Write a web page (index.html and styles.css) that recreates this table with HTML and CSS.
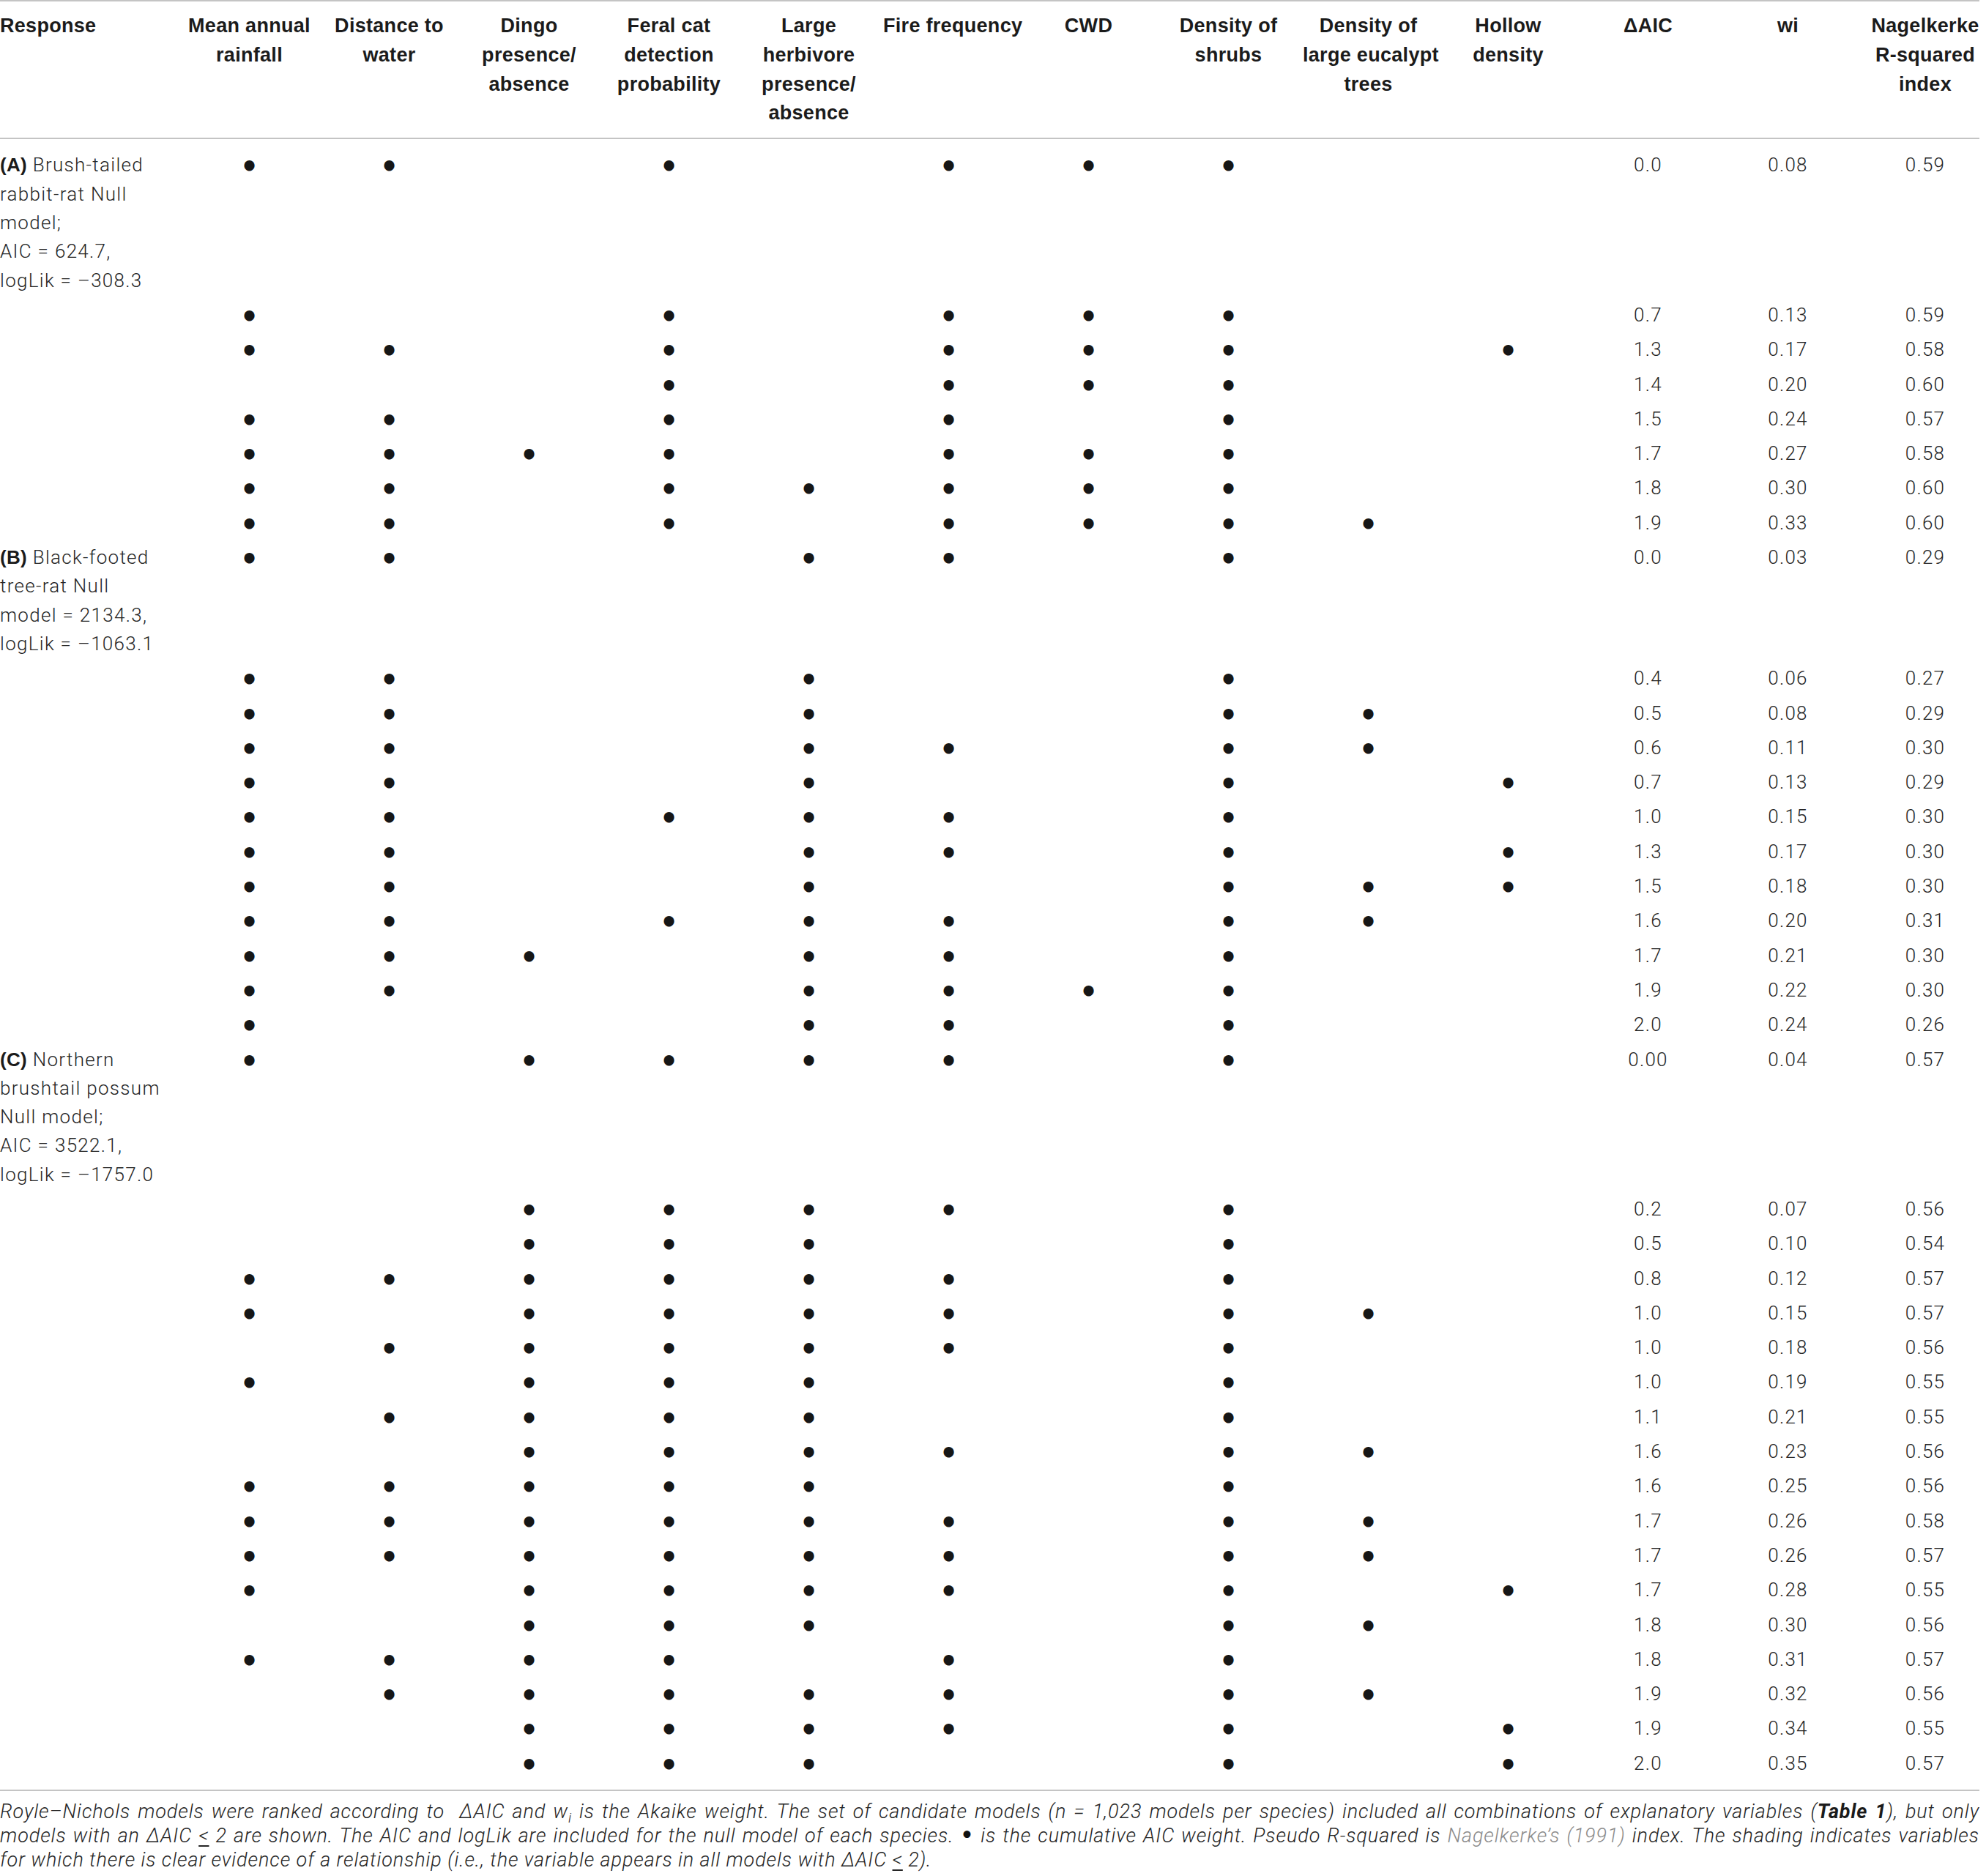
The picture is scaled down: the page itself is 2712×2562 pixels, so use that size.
FILE: index.html
```html
<!DOCTYPE html>
<html lang="en">
<head>
<meta charset="utf-8">
<title>Royle–Nichols model ranking</title>
<link rel="stylesheet" href="styles.css">
</head>
<body>
<div class="page">
<table class="models">
<colgroup>
<col class="c-resp"><col class="c-var"><col class="c-var"><col class="c-var"><col class="c-var"><col class="c-var"><col class="c-var"><col class="c-var"><col class="c-var"><col class="c-var"><col class="c-var"><col class="c-var"><col class="c-var"><col class="c-last">
</colgroup>
<thead>
<tr>
<th class="resp">Response</th>
<th>Mean annual<br>rainfall</th>
<th>Distance to<br>water</th>
<th>Dingo<br>presence/<br>absence</th>
<th>Feral cat<br>detection<br>probability</th>
<th>Large<br>herbivore<br>presence/<br>absence</th>
<th>Fire frequency</th>
<th>CWD</th>
<th>Density of<br>shrubs</th>
<th>Density of<br>large eucalypt<br>trees</th>
<th>Hollow<br>density</th>
<th>ΔAIC</th>
<th>wi</th>
<th class="last">Nagelkerke<br>R-squared<br>index</th>
</tr>
</thead>
<tbody>
<tr><td class="resp"><b>(A)</b> Brush-tailed<br>rabbit-rat Null<br>model;<br>AIC = 624.7,<br>logLik = –308.3</td><td>•</td><td>•</td><td></td><td>•</td><td></td><td>•</td><td>•</td><td>•</td><td></td><td></td><td class="n">0.0</td><td class="n">0.08</td><td class="n last">0.59</td></tr>
<tr><td class="resp"></td><td>•</td><td></td><td></td><td>•</td><td></td><td>•</td><td>•</td><td>•</td><td></td><td></td><td class="n">0.7</td><td class="n">0.13</td><td class="n last">0.59</td></tr>
<tr><td class="resp"></td><td>•</td><td>•</td><td></td><td>•</td><td></td><td>•</td><td>•</td><td>•</td><td></td><td>•</td><td class="n">1.3</td><td class="n">0.17</td><td class="n last">0.58</td></tr>
<tr><td class="resp"></td><td></td><td></td><td></td><td>•</td><td></td><td>•</td><td>•</td><td>•</td><td></td><td></td><td class="n">1.4</td><td class="n">0.20</td><td class="n last">0.60</td></tr>
<tr><td class="resp"></td><td>•</td><td>•</td><td></td><td>•</td><td></td><td>•</td><td></td><td>•</td><td></td><td></td><td class="n">1.5</td><td class="n">0.24</td><td class="n last">0.57</td></tr>
<tr><td class="resp"></td><td>•</td><td>•</td><td>•</td><td>•</td><td></td><td>•</td><td>•</td><td>•</td><td></td><td></td><td class="n">1.7</td><td class="n">0.27</td><td class="n last">0.58</td></tr>
<tr><td class="resp"></td><td>•</td><td>•</td><td></td><td>•</td><td>•</td><td>•</td><td>•</td><td>•</td><td></td><td></td><td class="n">1.8</td><td class="n">0.30</td><td class="n last">0.60</td></tr>
<tr><td class="resp"></td><td>•</td><td>•</td><td></td><td>•</td><td></td><td>•</td><td>•</td><td>•</td><td>•</td><td></td><td class="n">1.9</td><td class="n">0.33</td><td class="n last">0.60</td></tr>

<tr><td class="resp"><b>(B)</b> Black-footed<br>tree-rat Null<br>model = 2134.3,<br>logLik = –1063.1</td><td>•</td><td>•</td><td></td><td></td><td>•</td><td>•</td><td></td><td>•</td><td></td><td></td><td class="n">0.0</td><td class="n">0.03</td><td class="n last">0.29</td></tr>
<tr><td class="resp"></td><td>•</td><td>•</td><td></td><td></td><td>•</td><td></td><td></td><td>•</td><td></td><td></td><td class="n">0.4</td><td class="n">0.06</td><td class="n last">0.27</td></tr>
<tr><td class="resp"></td><td>•</td><td>•</td><td></td><td></td><td>•</td><td></td><td></td><td>•</td><td>•</td><td></td><td class="n">0.5</td><td class="n">0.08</td><td class="n last">0.29</td></tr>
<tr><td class="resp"></td><td>•</td><td>•</td><td></td><td></td><td>•</td><td>•</td><td></td><td>•</td><td>•</td><td></td><td class="n">0.6</td><td class="n">0.11</td><td class="n last">0.30</td></tr>
<tr><td class="resp"></td><td>•</td><td>•</td><td></td><td></td><td>•</td><td></td><td></td><td>•</td><td></td><td>•</td><td class="n">0.7</td><td class="n">0.13</td><td class="n last">0.29</td></tr>
<tr><td class="resp"></td><td>•</td><td>•</td><td></td><td>•</td><td>•</td><td>•</td><td></td><td>•</td><td></td><td></td><td class="n">1.0</td><td class="n">0.15</td><td class="n last">0.30</td></tr>
<tr><td class="resp"></td><td>•</td><td>•</td><td></td><td></td><td>•</td><td>•</td><td></td><td>•</td><td></td><td>•</td><td class="n">1.3</td><td class="n">0.17</td><td class="n last">0.30</td></tr>
<tr><td class="resp"></td><td>•</td><td>•</td><td></td><td></td><td>•</td><td></td><td></td><td>•</td><td>•</td><td>•</td><td class="n">1.5</td><td class="n">0.18</td><td class="n last">0.30</td></tr>
<tr><td class="resp"></td><td>•</td><td>•</td><td></td><td>•</td><td>•</td><td>•</td><td></td><td>•</td><td>•</td><td></td><td class="n">1.6</td><td class="n">0.20</td><td class="n last">0.31</td></tr>
<tr><td class="resp"></td><td>•</td><td>•</td><td>•</td><td></td><td>•</td><td>•</td><td></td><td>•</td><td></td><td></td><td class="n">1.7</td><td class="n">0.21</td><td class="n last">0.30</td></tr>
<tr><td class="resp"></td><td>•</td><td>•</td><td></td><td></td><td>•</td><td>•</td><td>•</td><td>•</td><td></td><td></td><td class="n">1.9</td><td class="n">0.22</td><td class="n last">0.30</td></tr>
<tr><td class="resp"></td><td>•</td><td></td><td></td><td></td><td>•</td><td>•</td><td></td><td>•</td><td></td><td></td><td class="n">2.0</td><td class="n">0.24</td><td class="n last">0.26</td></tr>

<tr><td class="resp"><b>(C)</b> Northern<br>brushtail possum<br>Null model;<br>AIC = 3522.1,<br>logLik = –1757.0</td><td>•</td><td></td><td>•</td><td>•</td><td>•</td><td>•</td><td></td><td>•</td><td></td><td></td><td class="n">0.00</td><td class="n">0.04</td><td class="n last">0.57</td></tr>
<tr><td class="resp"></td><td></td><td></td><td>•</td><td>•</td><td>•</td><td>•</td><td></td><td>•</td><td></td><td></td><td class="n">0.2</td><td class="n">0.07</td><td class="n last">0.56</td></tr>
<tr><td class="resp"></td><td></td><td></td><td>•</td><td>•</td><td>•</td><td></td><td></td><td>•</td><td></td><td></td><td class="n">0.5</td><td class="n">0.10</td><td class="n last">0.54</td></tr>
<tr><td class="resp"></td><td>•</td><td>•</td><td>•</td><td>•</td><td>•</td><td>•</td><td></td><td>•</td><td></td><td></td><td class="n">0.8</td><td class="n">0.12</td><td class="n last">0.57</td></tr>
<tr><td class="resp"></td><td>•</td><td></td><td>•</td><td>•</td><td>•</td><td>•</td><td></td><td>•</td><td>•</td><td></td><td class="n">1.0</td><td class="n">0.15</td><td class="n last">0.57</td></tr>
<tr><td class="resp"></td><td></td><td>•</td><td>•</td><td>•</td><td>•</td><td>•</td><td></td><td>•</td><td></td><td></td><td class="n">1.0</td><td class="n">0.18</td><td class="n last">0.56</td></tr>
<tr><td class="resp"></td><td>•</td><td></td><td>•</td><td>•</td><td>•</td><td></td><td></td><td>•</td><td></td><td></td><td class="n">1.0</td><td class="n">0.19</td><td class="n last">0.55</td></tr>
<tr><td class="resp"></td><td></td><td>•</td><td>•</td><td>•</td><td>•</td><td></td><td></td><td>•</td><td></td><td></td><td class="n">1.1</td><td class="n">0.21</td><td class="n last">0.55</td></tr>
<tr><td class="resp"></td><td></td><td></td><td>•</td><td>•</td><td>•</td><td>•</td><td></td><td>•</td><td>•</td><td></td><td class="n">1.6</td><td class="n">0.23</td><td class="n last">0.56</td></tr>
<tr><td class="resp"></td><td>•</td><td>•</td><td>•</td><td>•</td><td>•</td><td></td><td></td><td>•</td><td></td><td></td><td class="n">1.6</td><td class="n">0.25</td><td class="n last">0.56</td></tr>
<tr><td class="resp"></td><td>•</td><td>•</td><td>•</td><td>•</td><td>•</td><td>•</td><td></td><td>•</td><td>•</td><td></td><td class="n">1.7</td><td class="n">0.26</td><td class="n last">0.58</td></tr>
<tr><td class="resp"></td><td>•</td><td>•</td><td>•</td><td>•</td><td>•</td><td>•</td><td></td><td>•</td><td>•</td><td></td><td class="n">1.7</td><td class="n">0.26</td><td class="n last">0.57</td></tr>
<tr><td class="resp"></td><td>•</td><td></td><td>•</td><td>•</td><td>•</td><td>•</td><td></td><td>•</td><td></td><td>•</td><td class="n">1.7</td><td class="n">0.28</td><td class="n last">0.55</td></tr>
<tr><td class="resp"></td><td></td><td></td><td>•</td><td>•</td><td>•</td><td></td><td></td><td>•</td><td>•</td><td></td><td class="n">1.8</td><td class="n">0.30</td><td class="n last">0.56</td></tr>
<tr><td class="resp"></td><td>•</td><td>•</td><td>•</td><td>•</td><td></td><td>•</td><td></td><td>•</td><td></td><td></td><td class="n">1.8</td><td class="n">0.31</td><td class="n last">0.57</td></tr>
<tr><td class="resp"></td><td></td><td>•</td><td>•</td><td>•</td><td>•</td><td>•</td><td></td><td>•</td><td>•</td><td></td><td class="n">1.9</td><td class="n">0.32</td><td class="n last">0.56</td></tr>
<tr><td class="resp"></td><td></td><td></td><td>•</td><td>•</td><td>•</td><td>•</td><td></td><td>•</td><td></td><td>•</td><td class="n">1.9</td><td class="n">0.34</td><td class="n last">0.55</td></tr>
<tr><td class="resp"></td><td></td><td></td><td>•</td><td>•</td><td>•</td><td></td><td></td><td>•</td><td></td><td>•</td><td class="n">2.0</td><td class="n">0.35</td><td class="n last">0.57</td></tr>
</tbody>
</table>
<p class="note"><span class="ln just">Royle–Nichols models were ranked according to&nbsp; ΔAIC and <span class="w">w<sub class="sub">i</sub></span> is the Akaike weight. The set of candidate models (<i>n</i> = 1,023 models per species) included all combinations of explanatory variables (<b>Table 1</b>), but only</span><span class="ln just">models with an ΔAIC <span class="le">&lt;</span> 2 are shown. The AIC and logLik are included for the null model of each species. <span class="bul">•</span> is the cumulative AIC weight. Pseudo R-squared is <span class="ref">Nagelkerke’s (1991)</span> index. The shading indicates variables</span><span class="ln">for which there is clear evidence of a relationship (i.e., the variable appears in all models with ΔAIC <span class="le">&lt;</span> 2).</span></p>
</div>
</body>
</html>
```

FILE: styles.css
```css
html, body {
  margin: 0;
  padding: 0;
  background: #ffffff;
}

.page {
  width: 2703px;
}

.models {
  width: 2703px;
  border-collapse: separate;
  border-spacing: 0;
  table-layout: fixed;
  color: #222222;
}

.models col.c-resp { width: 245px; }
.models col.c-var { width: 191px; }
.models col.c-last { width: 166px; }

.models th {
  font-family: "Liberation Sans", Arial, sans-serif;
  font-weight: 700;
  font-size: 27px;
  line-height: 39.8px;
  letter-spacing: 0.3px;
  color: #1b1b1b;
  text-align: center;
  vertical-align: top;
  white-space: nowrap;
  padding: 14px 6px 13.3px;
  border-top: 2px solid #c4c4c4;
  border-bottom: 2px solid #c4c4c4;
}

.models th.resp {
  text-align: left;
  padding-left: 0;
}

.models th.last,
.models td.last {
  padding-left: 18px;
  padding-right: 0;
}

.models td {
  font-family: "DejaVu Sans", "Liberation Sans", sans-serif;
  font-weight: 700;
  font-size: 40px;
  line-height: 39.3px;
  color: #161616;
  text-align: center;
  vertical-align: top;
  white-space: nowrap;
  padding: 6px 6px 2px;
}

.models td.resp,
.models td.n {
  font-family: "Roboto", "Liberation Sans", Arial, sans-serif;
  font-weight: 300;
  font-size: 26px;
  letter-spacing: 1.3px;
  color: #262626;
  padding-top: 4px;
  padding-bottom: 4px;
}

.models td.resp {
  text-align: left;
  padding-left: 0;
}

.models td.resp b {
  font-family: "Liberation Sans", Arial, sans-serif;
  font-weight: 700;
  letter-spacing: 0.3px;
  color: #1b1b1b;
}

.models tbody tr:first-child td {
  padding-top: 18px;
}

.models tbody tr:first-child td.resp,
.models tbody tr:first-child td.n {
  padding-top: 16px;
}

.models tbody tr:last-child td {
  padding-bottom: 14px;
  border-bottom: 2px solid #c4c4c4;
}

.models tbody tr:last-child td.resp,
.models tbody tr:last-child td.n {
  padding-bottom: 16px;
}

.note {
  margin: 0;
  padding-top: 12px;
  font-family: "Roboto", "Liberation Sans", Arial, sans-serif;
  font-style: italic;
  font-weight: 300;
  font-size: 27px;
  line-height: 33px;
  letter-spacing: 0.9px;
  color: #262626;
  white-space: nowrap;
}

.note .ln {
  display: block;
  text-align: left;
}

.note .ln.just {
  white-space: normal;
  text-align: justify;
  text-align-last: justify;
}

.note .sub {
  font-size: 70%;
  vertical-align: -0.3em;
  line-height: 0;
}

.note b {
  font-weight: 700;
  color: #1b1b1b;
}

.note .le {
  text-decoration: underline;
  text-underline-offset: 4px;
}

.note .bul {
  font-style: normal;
  font-family: "DejaVu Sans", "Liberation Sans", sans-serif;
  font-weight: 700;
  font-size: 28px;
  line-height: 0;
  color: #111111;
}

.note .ref {
  color: #8c8c8c;
}
```
